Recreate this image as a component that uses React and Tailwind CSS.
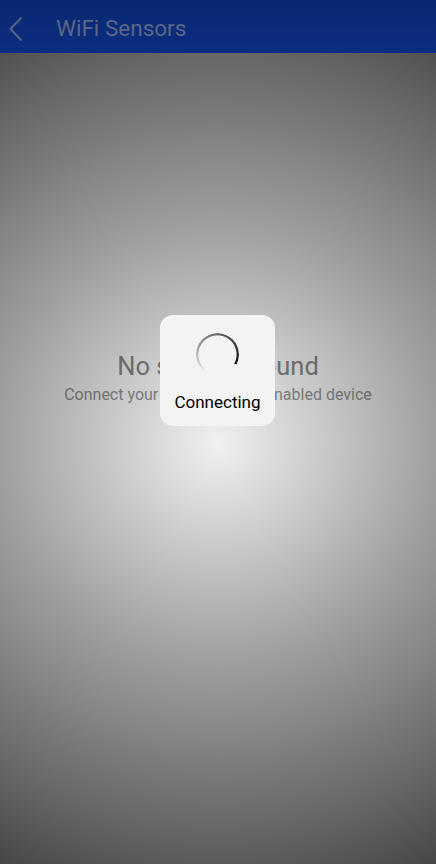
function BackChevron() {
  return (
    <svg width="24" height="30" viewBox="0 0 24 30" fill="none" className="ml-[4px]">
      <path d="M17 4 L6.5 15 L17 26" stroke="#56648a" strokeWidth="2" strokeLinecap="round" strokeLinejoin="round" />
    </svg>
  )
}

function Spinner() {
  return (
    <div className="h-[43px] w-[43px] rounded-full bg-[conic-gradient(from_220deg,rgba(0,0,0,0.03)_0deg,rgba(0,0,0,0.45)_100deg,#0d0d0d_258deg,transparent_259deg)] [mask:radial-gradient(farthest-side,transparent_calc(100%-2.8px),#000_calc(100%-2px))]" />
  )
}

export default function App() {
  return (
    <div className="relative flex h-[864px] w-[436px] flex-col overflow-hidden bg-white font-['Roboto',sans-serif]">
      <header className="flex h-[53px] shrink-0 items-center bg-[linear-gradient(#0a2870,#0b2d82)] pt-[4px]">
        <BackChevron />
        <h1 className="ml-[28px] text-[22.5px] text-[#5a6788]">WiFi Sensors</h1>
      </header>

      <main className="relative flex flex-1 flex-col items-center pt-[296px]">
        <h2 className="text-[25.5px] leading-[34px] text-[#8a8a8a]">No sensors found</h2>
        <p className="mt-[2px] text-[16px] leading-[20px] text-[#969696]">
          Connect your device to WiFi-enabled device
        </p>

        <div className="pointer-events-none absolute inset-0 bg-[radial-gradient(circle_at_50%_390px,rgba(0,0,0,0.06)_0px,rgba(0,0,0,0.38)_220px,rgba(0,0,0,0.6)_390px,rgba(0,0,0,0.76)_500px)]" />
      </main>

      <div className="absolute left-[160px] top-[315px] flex h-[111px] w-[115px] flex-col items-center rounded-[13px] bg-[#f3f3f3]">
        <div className="mt-[18px]">
          <Spinner />
        </div>
        <span className="mt-[16px] text-[17px] leading-[20px] text-black">Connecting</span>
      </div>
    </div>
  )
}
